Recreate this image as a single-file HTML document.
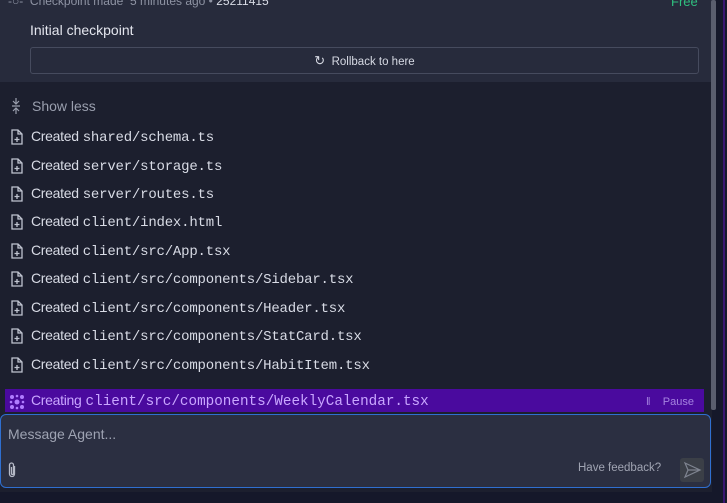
<!DOCTYPE html>
<html><head><style>
*{margin:0;padding:0;box-sizing:border-box}
body{width:727px;height:503px;background:#15182a;overflow:hidden;position:relative;font-family:"Liberation Sans",sans-serif;color:#d8dbe5}
.top{position:absolute;left:0;top:0;width:712px;height:82px;background:#272b3c}
.main{position:absolute;left:0;top:82px;width:712px;height:410px;background:#1c1f2e}
.sb{position:absolute;left:711px;top:0;width:5px;height:410px;background:#5a5e6e;border-radius:2px}
.pl{position:absolute;left:723px;top:0;width:2px;height:503px;background:#3a1670}
.t{position:absolute;white-space:nowrap}
.btn{position:absolute;left:30px;top:47px;width:669px;height:27px;border:1px solid #464b5e;border-radius:3px;font-size:11.5px;color:#d6d9e3;text-align:center;line-height:25px}
.row{position:absolute;left:10px;height:18px;font-size:14px;color:#d8dbe5;white-space:nowrap;display:flex;align-items:baseline;letter-spacing:-0.3px}
.row svg{margin-right:7px;align-self:center}
.m{font-family:"Liberation Mono",monospace;font-size:14px;margin-left:4px;letter-spacing:-0.2px}
.bar{position:absolute;left:5px;top:389px;width:699px;height:23px;background:#4a0a9e;display:flex;align-items:baseline;padding-top:3px;font-size:14px;color:#c9a6ff;letter-spacing:-0.3px}
.bar .m{color:#c9a6ff;letter-spacing:0}
.inp{position:absolute;left:0;top:414px;width:711px;height:74px;background:#2b2f41;border:1px solid #2f6fd0;border-radius:6px}
</style></head><body>
<div class="top"></div>
<div class="main"></div>
<div class="sb"></div><div class="pl"></div>
<div class="t" style="left:8px;top:-6px;font-size:12px;color:#8e93a3">-○- &nbsp;Checkpoint made &nbsp;5 minutes ago • <span style="color:#d8dbe5">25211415</span></div>
<div class="t" style="left:671px;top:-6px;font-size:13px;color:#2fbf7f">Free</div>
<div class="t" style="left:30px;top:22px;font-size:14px;color:#e4e6ee">Initial checkpoint</div>
<div class="btn"><span style="font-size:13px">↻</span>&nbsp; Rollback to here</div>
<div class="t" style="left:11px;top:98px;font-size:14px;color:#9a9fae;display:flex;align-items:center"><svg width="10" height="16" viewBox="0 0 10 16" fill="none" stroke="#9a9fae" stroke-width="1.2" style="margin-right:11px"><path d="M5 0v6 M2 3l3 3 3-3 M1 8h8 M5 16v-6 M2 13l3-3 3 3"/></svg>Show less</div>
<div class="row" style="top:128px"><svg width="14" height="16" viewBox="0 0 14 16" fill="none" stroke="#c0c4d0" stroke-width="1.3"><path d="M2 1h6l4 4v10H2z M8 1v4h4 M7 8v5 M4.5 10.5h5"/></svg>Created<span class="m">shared/schema.ts</span></div>
<div class="row" style="top:157px"><svg width="14" height="16" viewBox="0 0 14 16" fill="none" stroke="#c0c4d0" stroke-width="1.3"><path d="M2 1h6l4 4v10H2z M8 1v4h4 M7 8v5 M4.5 10.5h5"/></svg>Created<span class="m">server/storage.ts</span></div>
<div class="row" style="top:185px"><svg width="14" height="16" viewBox="0 0 14 16" fill="none" stroke="#c0c4d0" stroke-width="1.3"><path d="M2 1h6l4 4v10H2z M8 1v4h4 M7 8v5 M4.5 10.5h5"/></svg>Created<span class="m">server/routes.ts</span></div>
<div class="row" style="top:213px"><svg width="14" height="16" viewBox="0 0 14 16" fill="none" stroke="#c0c4d0" stroke-width="1.3"><path d="M2 1h6l4 4v10H2z M8 1v4h4 M7 8v5 M4.5 10.5h5"/></svg>Created<span class="m">client/index.html</span></div>
<div class="row" style="top:242px"><svg width="14" height="16" viewBox="0 0 14 16" fill="none" stroke="#c0c4d0" stroke-width="1.3"><path d="M2 1h6l4 4v10H2z M8 1v4h4 M7 8v5 M4.5 10.5h5"/></svg>Created<span class="m">client/src/App.tsx</span></div>
<div class="row" style="top:270px"><svg width="14" height="16" viewBox="0 0 14 16" fill="none" stroke="#c0c4d0" stroke-width="1.3"><path d="M2 1h6l4 4v10H2z M8 1v4h4 M7 8v5 M4.5 10.5h5"/></svg>Created<span class="m">client/src/components/Sidebar.tsx</span></div>
<div class="row" style="top:299px"><svg width="14" height="16" viewBox="0 0 14 16" fill="none" stroke="#c0c4d0" stroke-width="1.3"><path d="M2 1h6l4 4v10H2z M8 1v4h4 M7 8v5 M4.5 10.5h5"/></svg>Created<span class="m">client/src/components/Header.tsx</span></div>
<div class="row" style="top:327px"><svg width="14" height="16" viewBox="0 0 14 16" fill="none" stroke="#c0c4d0" stroke-width="1.3"><path d="M2 1h6l4 4v10H2z M8 1v4h4 M7 8v5 M4.5 10.5h5"/></svg>Created<span class="m">client/src/components/StatCard.tsx</span></div>
<div class="row" style="top:356px"><svg width="14" height="16" viewBox="0 0 14 16" fill="none" stroke="#c0c4d0" stroke-width="1.3"><path d="M2 1h6l4 4v10H2z M8 1v4h4 M7 8v5 M4.5 10.5h5"/></svg>Created<span class="m">client/src/components/HabitItem.tsx</span></div>
<div class="bar"><svg style="margin:0 6px 0 4px;align-self:center" width="16" height="16" viewBox="0 0 16 16" fill="#b07cff"><circle cx="3" cy="3" r="2"/><circle cx="13" cy="3" r="2"/><circle cx="3" cy="13" r="2"/><circle cx="13" cy="13" r="2"/><circle cx="8" cy="8" r="2.5"/><circle cx="8" cy="2" r="1.3"/><circle cx="8" cy="14" r="1.3"/><circle cx="2" cy="8" r="1.3"/><circle cx="14" cy="8" r="1.3"/></svg>Creating<span class="m" style="font-size:14.3px">client/src/components/WeeklyCalendar.tsx</span><span style="margin-left:auto;margin-right:10px;font-size:11px;color:#a583e0;letter-spacing:0">‖&nbsp;&nbsp;&nbsp; Pause</span></div>
<div class="inp">
<div class="t" style="left:7px;top:11px;font-size:14px;color:#9ea3b2">Message Agent...</div>
<div class="t" style="left:6px;top:47px">
<svg width="10" height="16" viewBox="0 0 10 16" fill="none" stroke="#b5b9c6" stroke-width="1.3"><path d="M7.5 4v8a2.5 2.5 0 0 1-5 0V3a2 2 0 0 1 4 0v8.5a1 1 0 0 1-2 0V5"/></svg></div>
<div class="t" style="left:577px;top:47px;font-size:11.5px;color:#a0a4b2">Have feedback?</div>
<div style="position:absolute;left:679px;top:43px;width:24px;height:24px;background:#3b3f47;border-radius:3px"><svg width="24" height="24" viewBox="0 0 24 24" fill="none" stroke="#7f8490" stroke-width="1.2"><path d="M5 5l15 7-15 7 3-7z M8 12h12"/></svg></div>
</div>
</body></html>
